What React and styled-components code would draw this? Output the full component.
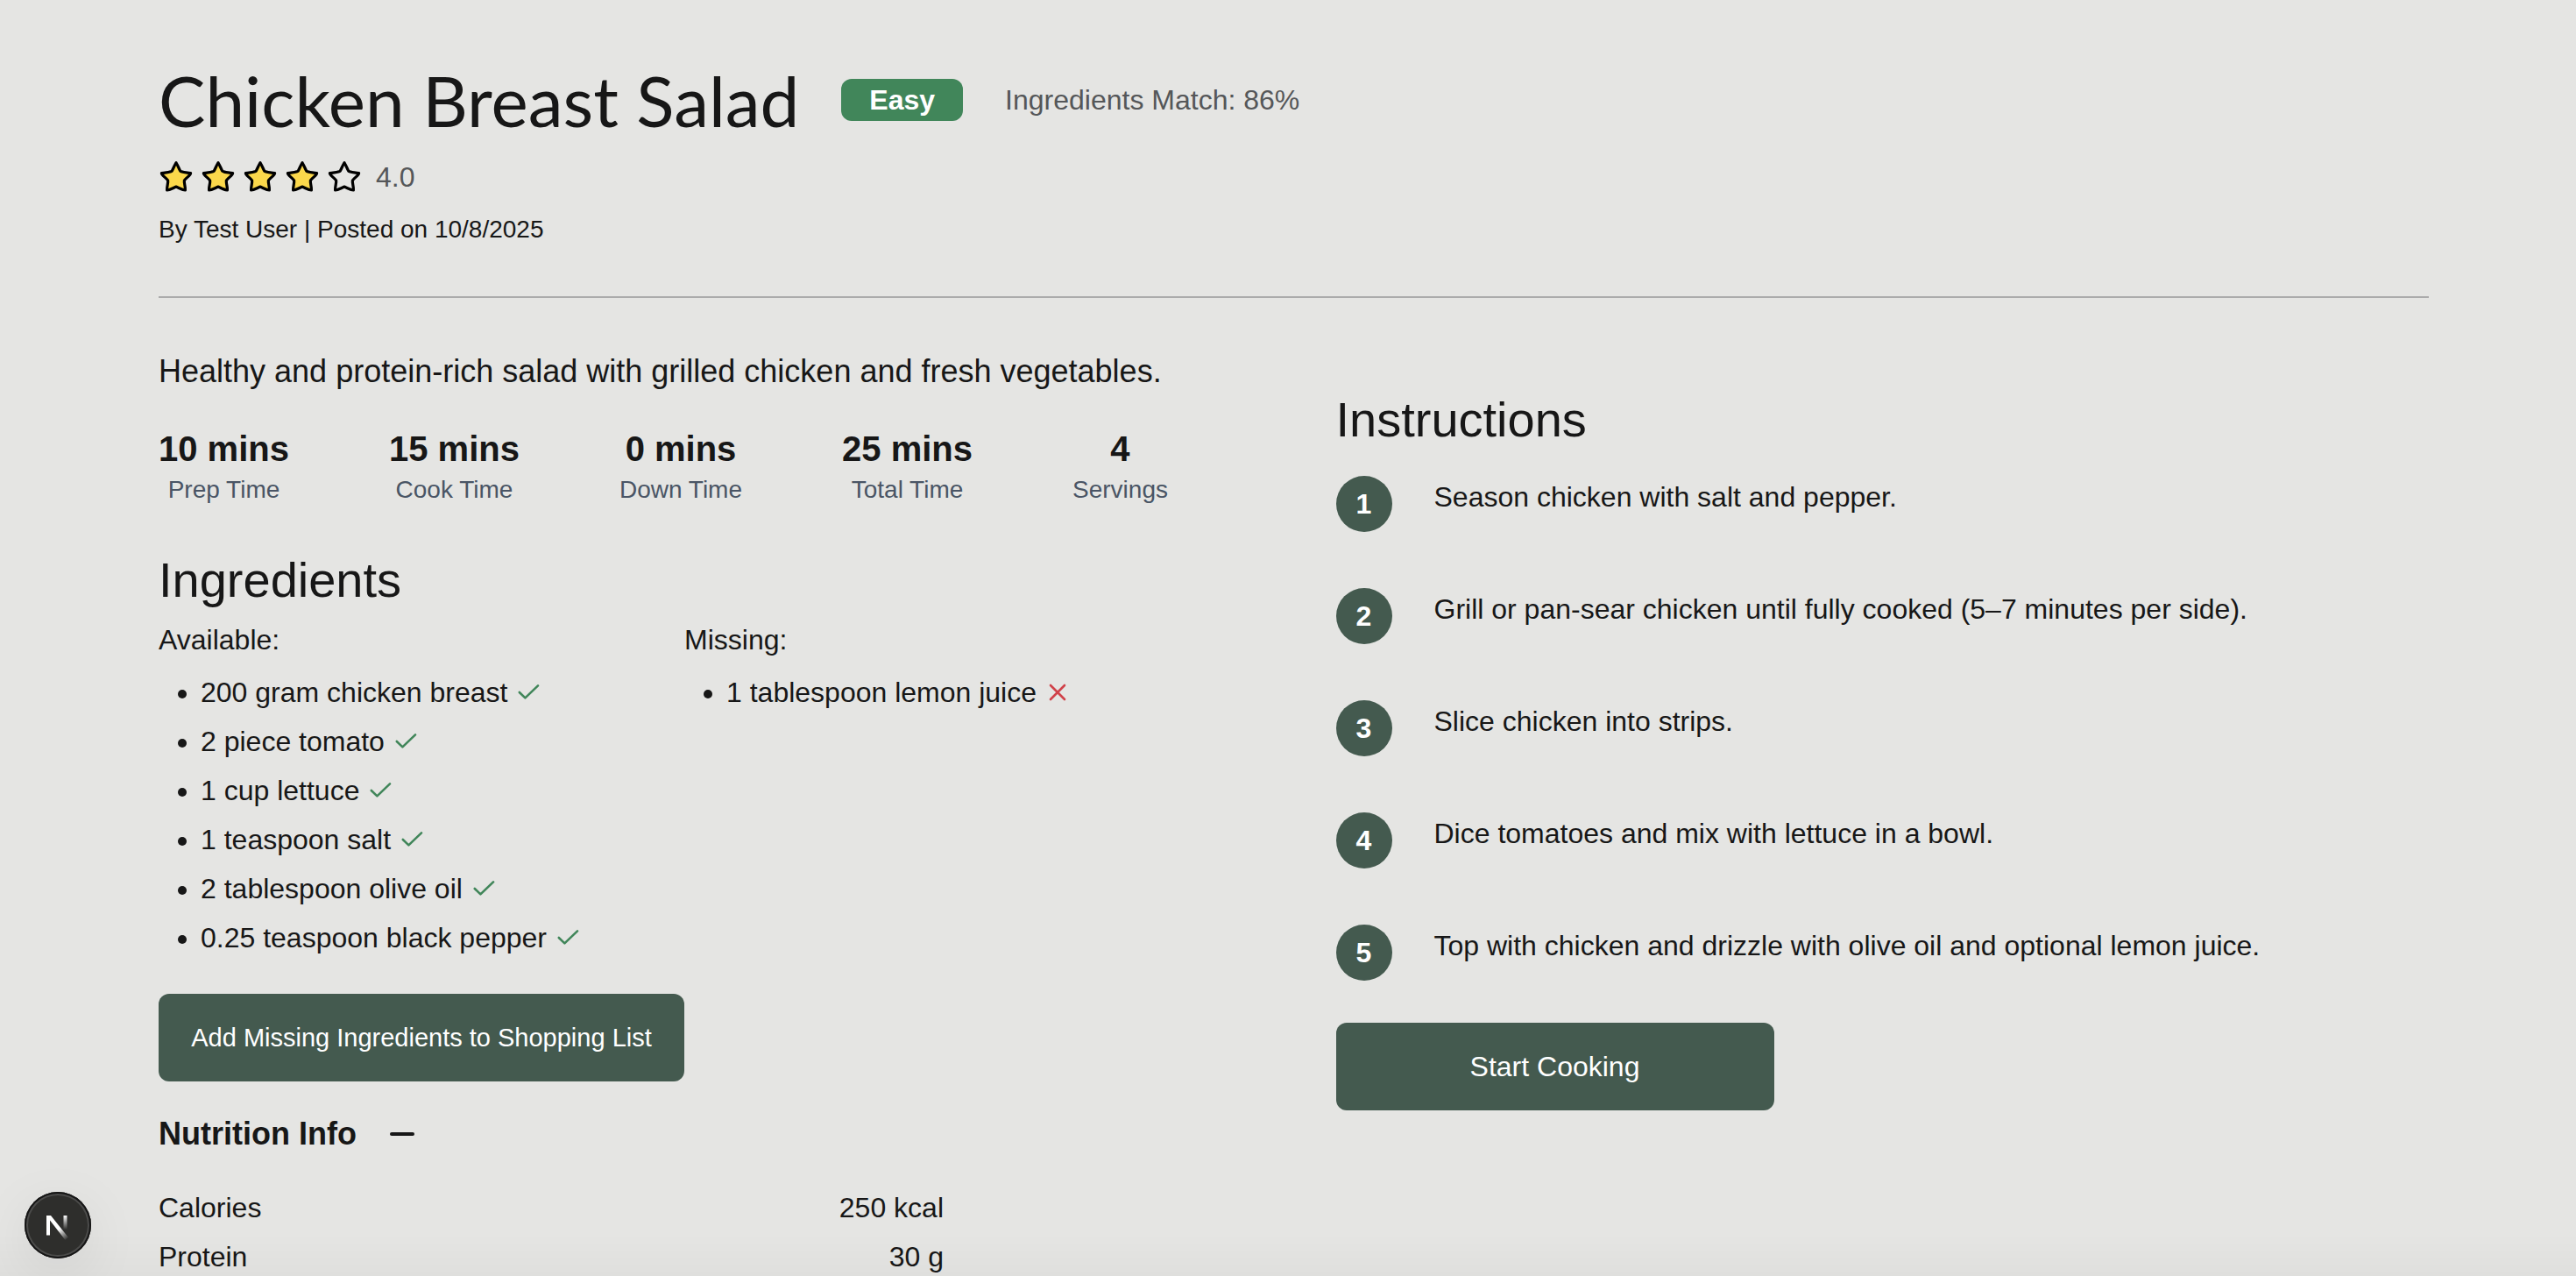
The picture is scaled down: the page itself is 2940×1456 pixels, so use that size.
import React, { useState } from "react";
import styled, { createGlobalStyle } from "styled-components";

const GlobalStyle = createGlobalStyle`
  *, *::before, *::after { box-sizing: border-box; }
  html, body { margin: 0; background: #e5e5e3; }
  body {
    color: #171717;
    font-family: "Liberation Sans", Arial, Helvetica, sans-serif;
    font-size: 32px;
    line-height: 48px;
    height: 100vh;
    overflow: hidden;
  }
  h1, h2, h3, p, ul, ol, dl, dd { margin: 0; padding: 0; font-weight: 400; }
  button { font: inherit; border: 0; cursor: pointer; }
`;

const Page = styled.main`
  padding: 64px 168px 64px 181px;
`;

const Header = styled.header`
  border-bottom: 2px solid #ababab;
  padding-bottom: 56px;
`;

const TitleRow = styled.div`
  display: flex;
  align-items: center;
  gap: 48px;
`;

const Title = styled.h1`
  font-family: Lato, sans-serif;
  font-size: 80px;
  line-height: 100px;
`;

const Badge = styled.span`
  padding: 0 32px;
  border-radius: 12px;
  background: #41865a;
  color: #fff;
  font-weight: 700;
`;

const Match = styled.p`
  color: #555759;
`;

const Rating = styled.div`
  display: flex;
  align-items: center;
  gap: 8px;
  margin-top: 14px;
`;

const Score = styled.span`
  margin-left: 8px;
  color: #555759;
`;

const Byline = styled.p`
  margin-top: 16px;
  font-size: 28px;
  line-height: 40px;
`;

const Columns = styled.div`
  display: grid;
  grid-template-columns: 1fr 1fr;
  gap: 96px;
`;

const Left = styled.section`
  padding-top: 56px;
`;

const Right = styled.section`
  padding-top: 103px;
`;

const Description = styled.p`
  font-size: 36px;
  line-height: 56px;
`;

const Stats = styled.dl`
  display: flex;
  justify-content: space-between;
  max-width: 1152px;
  margin-top: 32px;
`;

const Stat = styled.div`
  display: flex;
  flex-direction: column-reverse;
  align-items: center;
`;

const StatValue = styled.dd`
  font-size: 40px;
  font-weight: 700;
  line-height: 56px;
`;

const StatLabel = styled.dt`
  color: #4a5565;
  font-size: 28px;
  line-height: 38px;
`;

const Heading = styled.h2`
  font-size: 56px;
  line-height: 72px;
`;

const IngredientsHeading = styled(Heading)`
  margin-top: 48px;
`;

const Lists = styled.div`
  display: grid;
  grid-template-columns: 600px 600px;
  margin-top: 8px;
`;

const List = styled.ul`
  margin-top: 12px;
  padding-left: 48px;
  list-style: disc;
`;

const Item = styled.li`
  line-height: 48px;
  & + & { margin-top: 8px; }
  svg { display: inline-block; vertical-align: middle; }
`;

const PrimaryButton = styled.button`
  display: block;
  width: ${(p) => p.$width};
  height: 100px;
  border-radius: 12px;
  background: #445a4f;
  color: #fff;
  font-size: ${(p) => p.$size};
`;

const AddButton = styled(PrimaryButton)`
  margin-top: 40px;
`;

const StartButton = styled(PrimaryButton)`
  margin-top: 48px;
`;

const NutritionToggle = styled.button`
  display: flex;
  align-items: center;
  gap: 32px;
  margin-top: 32px;
  padding: 0;
  background: none;
  color: inherit;
  && { font-size: 36px; font-weight: 700; line-height: 56px; }
`;

const Nutrition = styled.table`
  width: 896px;
  margin-top: 32px;
  border-collapse: collapse;
  th, td { padding: 0 0 8px; font-weight: 400; text-align: left; }
  td { text-align: right; }
`;

const Steps = styled.ol`
  display: flex;
  flex-direction: column;
  gap: 64px;
  margin-top: 28px;
  list-style: none;
`;

const Step = styled.li`
  display: flex;
  gap: 48px;
`;

const StepNumber = styled.span`
  display: flex;
  align-items: center;
  justify-content: center;
  width: 64px;
  height: 64px;
  border-radius: 50%;
  background: #445a4f;
  color: #fff;
  font-weight: 700;
`;

const BottomShade = styled.div`
  position: fixed;
  inset: auto 0 0 0;
  height: 48px;
  background: linear-gradient(rgba(0, 0, 0, 0), rgba(0, 0, 0, 0.025));
  pointer-events: none;
`;

const DevButton = styled.button`
  position: fixed;
  left: 28px;
  bottom: 20px;
  display: grid;
  place-items: center;
  width: 76px;
  height: 76px;
  padding: 0;
  border-radius: 50%;
  background: #2e2e2c;
  box-shadow: inset 0 0 0 2px #151515, inset 0 0 0 4px #4b4b4a,
    0 16px 64px rgba(0, 0, 0, 0.08);
`;

const STAR =
  "M20 3.6 C21.4 5.5 23 10 24.8 13.2 C26.4 14.8 32 14.6 36.6 15.6 C36.4 18.2 31.6 20.6 29.4 23.8 C28.8 27 30.8 31 30.4 35 C27.4 35.2 23.6 32.4 20 31 C16.4 32.4 12.6 35.2 9.6 35 C9.2 31 11.2 27 10.6 23.8 C8.4 20.6 3.6 18.2 3.4 15.6 C8 14.6 13.6 14.8 15.2 13.2 C17 10 18.6 5.5 20 3.6 Z";

function Star({ filled }) {
  return (
    <svg width="40" height="40" viewBox="0 0 40 40" aria-hidden="true">
      <path d={STAR} fill={filled ? "#fbd84b" : "none"} stroke="#000" strokeWidth="3.2" strokeLinejoin="round" />
    </svg>
  );
}

function Check() {
  return (
    <svg width="32" height="32" viewBox="0 0 32 32" fill="none" stroke="#41865a" strokeWidth="2.6" strokeLinecap="round" strokeLinejoin="round" aria-label="available">
      <path d="M4.8 13 L11.4 19.4 L26 5.4" />
    </svg>
  );
}

function Cross() {
  return (
    <svg width="32" height="32" viewBox="0 0 32 32" fill="none" stroke="#d0424a" strokeWidth="2.6" strokeLinecap="round" aria-label="missing">
      <path d="M7 5 L23 21 M23 5 L7 21" />
    </svg>
  );
}

function NextMark() {
  return (
    <svg width="40" height="40" viewBox="0 0 40 40" aria-hidden="true">
      <defs>
        <linearGradient id="diagonal" gradientUnits="userSpaceOnUse" x1="22" y1="24" x2="31" y2="36">
          <stop stopColor="#fff" />
          <stop offset="1" stopColor="#fff" stopOpacity="0" />
        </linearGradient>
        <linearGradient id="stem" gradientUnits="userSpaceOnUse" x1="28" y1="9" x2="28" y2="25">
          <stop stopColor="#fff" />
          <stop offset="1" stopColor="#fff" stopOpacity="0" />
        </linearGradient>
      </defs>
      <path d="M7 9 H12 L32 34 L28.5 37 L11 14.5 V31.5 H7 Z" fill="url(#diagonal)" />
      <rect x="26.5" y="9" width="4" height="16" fill="url(#stem)" />
    </svg>
  );
}

const stats = [
  ["10 mins", "Prep Time"],
  ["15 mins", "Cook Time"],
  ["0 mins", "Down Time"],
  ["25 mins", "Total Time"],
  ["4", "Servings"],
];

const available = [
  "200 gram chicken breast",
  "2 piece tomato",
  "1 cup lettuce",
  "1 teaspoon salt",
  "2 tablespoon olive oil",
  "0.25 teaspoon black pepper",
];

const steps = [
  "Season chicken with salt and pepper.",
  "Grill or pan-sear chicken until fully cooked (5–7 minutes per side).",
  "Slice chicken into strips.",
  "Dice tomatoes and mix with lettuce in a bowl.",
  "Top with chicken and drizzle with olive oil and optional lemon juice.",
];

const nutrition = [
  ["Calories", "250 kcal"],
  ["Protein", "30 g"],
];

export default function App() {
  const [open, setOpen] = useState(true);
  return (
    <>
      <GlobalStyle />
      <Page>
        <Header>
          <TitleRow>
            <Title>Chicken Breast Salad</Title>
            <Badge>Easy</Badge>
            <Match>Ingredients Match: 86%</Match>
          </TitleRow>
          <Rating>
            {[1, 2, 3, 4, 5].map((n) => (
              <Star key={n} filled={n <= 4} />
            ))}
            <Score>4.0</Score>
          </Rating>
          <Byline>By Test User | Posted on 10/8/2025</Byline>
        </Header>
        <Columns>
          <Left>
            <Description>
              Healthy and protein-rich salad with grilled chicken and fresh vegetables.
            </Description>
            <Stats>
              {stats.map(([value, label]) => (
                <Stat key={label}>
                  <StatLabel>{label}</StatLabel>
                  <StatValue>{value}</StatValue>
                </Stat>
              ))}
            </Stats>
            <IngredientsHeading>Ingredients</IngredientsHeading>
            <Lists>
              <div>
                <p>Available:</p>
                <List>
                  {available.map((name) => (
                    <Item key={name}>
                      {name} <Check />
                    </Item>
                  ))}
                </List>
              </div>
              <div>
                <p>Missing:</p>
                <List>
                  <Item>
                    1 tablespoon lemon juice <Cross />
                  </Item>
                </List>
              </div>
            </Lists>
            <AddButton $width="600px" $size="29px">
              Add Missing Ingredients to Shopping List
            </AddButton>
            <NutritionToggle aria-expanded={open} onClick={() => setOpen(!open)}>
              Nutrition Info
              <svg width="40" height="40" viewBox="0 0 40 40" stroke="#171717" strokeWidth="4" strokeLinecap="round" aria-hidden="true">
                <path d={open ? "M8 20 H32" : "M8 20 H32 M20 8 V32"} />
              </svg>
            </NutritionToggle>
            {open && (
              <Nutrition>
                <tbody>
                  {nutrition.map(([name, amount]) => (
                    <tr key={name}>
                      <th scope="row">{name}</th>
                      <td>{amount}</td>
                    </tr>
                  ))}
                </tbody>
              </Nutrition>
            )}
          </Left>
          <Right>
            <Heading>Instructions</Heading>
            <Steps>
              {steps.map((text, i) => (
                <Step key={text}>
                  <StepNumber>{i + 1}</StepNumber>
                  <p>{text}</p>
                </Step>
              ))}
            </Steps>
            <StartButton $width="500px" $size="32px">
              Start Cooking
            </StartButton>
          </Right>
        </Columns>
      </Page>
      <BottomShade />
      <DevButton aria-label="Open developer tools">
        <NextMark />
      </DevButton>
    </>
  );
}
